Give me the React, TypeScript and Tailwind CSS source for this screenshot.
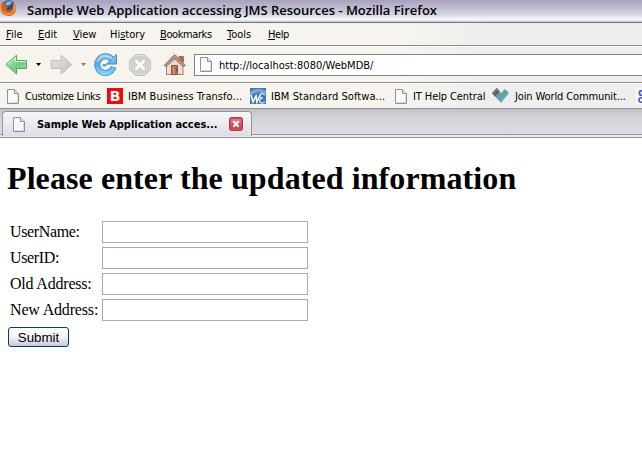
import React from "react";

const PageIcon = () => (
  <svg width="12" height="15" viewBox="0 0 12 15" className="shrink-0">
    <path d="M.5.5h7l4 4v10H.5z" fill="#f9fafc" stroke="#8d929c" />
    <path d="M7.5.5v4h4" fill="#e2e5ea" stroke="#8d929c" />
    <path d="M2 13.5h8.5V6" fill="none" stroke="#d3dae4" />
  </svg>
);

const FirefoxIcon = () => (
  <svg width="17" height="17" viewBox="0 0 17 17" className="shrink-0">
    <circle cx="8.5" cy="7" r="6.8" fill="#2b4c8e" />
    <path d="M5 3Q8 0 12 2L10 5 7 6z" fill="#7dbbe3" />
    <path d="M1.5 2L3 4Q5 2 7 4L5 5.5 8 7.5 6 9Q8 11.5 11 9.5Q14 7 12.5 2Q17 5 16 10Q14 16 8.5 16Q1.5 15 .8 9.5Q.3 5 1.5 2z" fill="#dc5f17" />
    <path d="M1.3 6Q2 12 7 13.2Q13 13.5 15 8Q14 15.5 8 15Q1 13.5 1.3 6z" fill="#f49a26" />
    <path d="M13.5 3.5Q16 7 15.2 10L13.4 11.5Q15 8 13.5 3.5z" fill="#ffe168" />
  </svg>
);

const ArrowIcon = ({ back = false }: { back?: boolean }) => (
  <svg width="23" height="22" viewBox="0 0 23 22" className="shrink-0">
    <defs>
      <linearGradient id="green" x2="1" y2="1"><stop stopColor="#c8f0c4" /><stop offset=".55" stopColor="#72cc84" /><stop offset="1" stopColor="#a0e5ac" /></linearGradient>
      <linearGradient id="gray" x2="1" y2="1"><stop stopColor="#e6e6e4" /><stop offset="1" stopColor="#c2c2c0" /></linearGradient>
    </defs>
    {back ? (
      <>
        <path d="M.9 10.5L11.5 1.2V6.5H21.5V14.5H11.5V20z" fill="url(#green)" stroke="#55a465" />
        <path d="M2.6 10.3L10.5 3.5V7.5H20.5" fill="none" stroke="#d8f5d5" />
      </>
    ) : (
      <path d="M21.7 10.5L11.2 1.2V6.5H1.2V14.5H11.2V20z" fill="url(#gray)" stroke="#bcbcbb" />
    )}
  </svg>
);

const Caret = ({ light = false }: { light?: boolean }) => (
  <svg width="5" height="3" viewBox="0 0 5 3" className="shrink-0">
    <path d="M0 0h5L2.5 3z" fill={light ? "#777" : "#000"} />
  </svg>
);

const ReloadIcon = () => (
  <svg width="24" height="24" viewBox="0 0 24 24" className="shrink-0">
    <defs><linearGradient id="blue" gradientUnits="userSpaceOnUse" x1="0" y1="1" x2="0" y2="22"><stop stopColor="#9cd4f3" /><stop offset=".5" stopColor="#4fa9e4" /><stop offset="1" stopColor="#8bdcff" /></linearGradient></defs>
    <path d="M17.8 6.2A8.3 8.3 0 1 0 19.5 14" fill="none" stroke="#3c86c2" strokeWidth="6" />
    <path d="M17.8 6.2A8.3 8.3 0 1 0 19.5 14" fill="none" stroke="url(#blue)" strokeWidth="4.4" />
    <path d="M22.4 1.5V11H12.6z" fill="#6dbbea" stroke="#3c86c2" />
    <path d="M4 8Q6.5 3 11.5 3Q16 3.2 18.6 6.4L21.5 3.6" fill="none" stroke="#c7eafb" />
    <path d="M8.5 11h5l-2 2.5h-3z" fill="#5aa7dc" />
  </svg>
);

const StopIcon = () => (
  <svg width="22" height="22" viewBox="0 0 22 22" className="shrink-0">
    <path d="M6.5.5h9L21.5 6.5v9L15.5 21.5h-9L.5 15.5v-9z" fill="#d0d0ce" stroke="#c0c0be" />
    <path d="M1.5 15V7l5.5-5.5h8l5.5 5.5v8l-5.5 5.5H7z" fill="none" stroke="#dededc" />
    <path d="M6.5 6.5l9 9M15.5 6.5l-9 9" stroke="#fff" strokeWidth="2.8" />
  </svg>
);

const HomeIcon = () => (
  <svg width="24" height="24" viewBox="0 0 24 24" className="shrink-0">
    <path d="M16 3.5h4.5V9H16z" fill="#cf614c" stroke="#a8685a" />
    <path d="M3.5 12L11.5 4.5 20 12v9.5H3.5z" fill="#e9dbcf" stroke="#a08476" />
    <path d="M1 12.5L11 2h1.5L22.5 12.5 20 13.5 11.7 6 3 13.5z" fill="#b59485" stroke="#8a6e62" strokeWidth=".8" />
    <path d="M8.5 12.5h6v9h-6z" fill="#b8745d" stroke="#8b5646" />
    <path d="M10.5 14v7" stroke="#dda58b" />
    <path d="M12.5 15.5h1v3" fill="none" stroke="#8b4434" />
    <path d="M3 21.5h5M15.5 21.5h5" stroke="#8a8f6c" />
  </svg>
);

const Row = ({ label, tracking }: { label: string; tracking: string }) => (
  <div className="flex h-[26px] items-center">
    <label className={`w-[92px] shrink-0 whitespace-nowrap text-base leading-[22px] ${tracking}`}>{label}</label>
    <input aria-label={label} className="h-[22px] w-[206px] border border-[#a5acb2] bg-white px-1 outline-none" />
  </div>
);

const Menu = ({ k, pre = "", rest, className }: { k: string; pre?: string; rest: string; className: string }) => (
  <span className={`mt-[3px] shrink-0 whitespace-nowrap ${className}`}>{pre}<u className="underline-offset-1">{k}</u>{rest}</span>
);

export default function App() {
  return (
    <div className="flex h-[458px] w-[642px] flex-col overflow-hidden bg-white font-['DejaVu_Sans_Condensed','DejaVu_Sans',sans-serif] text-[11px] text-black">
      <header className="flex h-[23px] shrink-0 items-start border-b border-[#6d7196] bg-[linear-gradient(#aaa0bd_0,#b7b3ca_25%,#d4d4e1_65%,#f8f8fc_88%,#c8c8d7_100%)]">
        <FirefoxIcon />
        <span className="ml-[10px] whitespace-nowrap font-['Open_Sans',sans-serif] text-[13px] font-semibold leading-5 tracking-[-0.02px]">Sample Web Application accessing JMS Resources - Mozilla Firefox</span>
      </header>
      <div className="flex h-[86px] shrink-0 flex-col bg-[linear-gradient(90deg,#f7f4ed_0,#f6f4ed_63%,#eee_76%)]">
        <nav className="flex h-[23px] shrink-0 items-center border-b border-[#8e9099] pl-[6px]">
          <Menu k="F" rest="ile" className="w-8" />
          <Menu k="E" rest="dit" className="w-[35px]" />
          <Menu k="V" rest="iew" className="w-[37px]" />
          <Menu pre="Hi" k="s" rest="tory" className="w-[50px]" />
          <Menu k="B" rest="ookmarks" className="w-[67px] tracking-[-0.4px]" />
          <Menu k="T" rest="ools" className="w-[41px]" />
          <Menu k="H" rest="elp" className="tracking-[-0.4px]" />
        </nav>
        <div className="flex h-[37px] shrink-0 items-center border-b border-t border-b-[#8e9099] border-t-white pl-[5px]">
          <ArrowIcon back />
          <div className="ml-2"><Caret /></div>
          <div className="ml-[9px]"><ArrowIcon /></div>
          <div className="ml-2"><Caret light /></div>
          <div className="ml-[8px]"><ReloadIcon /></div>
          <div className="ml-[11px]"><StopIcon /></div>
          <div className="ml-3"><HomeIcon /></div>
          <div className="ml-[7px] flex h-[22px] flex-1 items-center border border-r-0 border-[#7f8288] bg-white pl-[5px]">
            <PageIcon />
            <span className="ml-[7px] mt-[3px]">http://localhost:8080/WebMDB/</span>
          </div>
        </div>
        <div className="flex h-[26px] shrink-0 items-center border-b border-t border-b-[#8e9099] border-t-white pl-[7px]">
          <PageIcon />
          <span className="ml-[6px] mt-[3px] w-[82px] shrink-0 whitespace-nowrap tracking-[-0.35px]">Customize Links</span>
          <span className="flex size-4 shrink-0 items-center justify-center bg-[#f00c0c] font-['DejaVu_Sans'] text-sm font-bold leading-4 text-white">B</span>
          <span className="ml-[5px] mt-[3px] w-[122px] shrink-0 whitespace-nowrap tracking-[0.05px]">IBM Business Transfo...</span>
          <svg width="16" height="16" viewBox="0 0 16 16" className="shrink-0">
            <path d="M0 0h16v16H0z" fill="#4377b0" />
            <path d="M0 4q8-6 16-1v3q-8-4-16 2z" fill="#7ba5cf" />
            <path d="M1 7l2 7 3-6 1 6 3-7" fill="none" stroke="#fff" strokeWidth="1.5" />
            <path d="M15 7q-4-3-5 0-1 3 3 3-4 0-3 4 2 2 5 0" fill="none" stroke="#d3e0ed" strokeWidth="1.4" />
          </svg>
          <span className="ml-[5px] mt-[3px] w-[124px] shrink-0 whitespace-nowrap tracking-[0.07px]">IBM Standard Softwa...</span>
          <PageIcon />
          <span className="ml-[6px] mt-[3px] w-[79px] shrink-0 whitespace-nowrap tracking-[-0.1px]">IT Help Central</span>
          <svg width="17" height="16" viewBox="0 0 17 16" className="shrink-0">
            <path d="M0 5l5-5 4 5 4-4 4 4-8 10z" fill="#5fa3a8" />
            <path d="M0 5l5-5 3 4.5-5 4.5z" fill="#5c6468" />
            <path d="M1 6l5-5M3 9l5-5" stroke="#9aa6a8" strokeWidth=".6" />
            <path d="M8 14l8-9" stroke="#8cc3c6" strokeWidth=".7" />
          </svg>
          <span className="ml-[6px] mt-[3px] w-[121px] shrink-0 whitespace-nowrap tracking-[-0.12px]">Join World Communit...</span>
          <svg width="6" height="16" viewBox="0 0 6 16" className="shrink-0">
            <path d="M0 0h6v16H0z" fill="#fafafe" />
            <circle cx="5.8" cy="5" r="2.4" fill="none" stroke="#4858cf" strokeWidth="1.8" />
            <ellipse cx="5.8" cy="12" rx="3" ry="2.3" fill="none" stroke="#4858cf" strokeWidth="1.6" />
          </svg>
        </div>
      </div>
      <div className="flex h-[29px] shrink-0 flex-col border-b border-[#92939b] bg-[#ececf0]">
        <div className="flex h-[26px] border-b border-[#92939b] bg-[linear-gradient(#c2c1c6,#d5d3da_35%,#dddce2)] pl-[2px]">
          <div className="mt-[2px] flex h-[25px] w-[250px] items-center rounded-t border border-b-0 border-[#92939b] bg-[linear-gradient(#f7f7fa,#e9e7ec_60%,#e0dce4)] pl-[10px]">
            <PageIcon />
            <span className="ml-[12px] mt-[3px] w-[192px] shrink-0 whitespace-nowrap font-bold tracking-[-0.03px]">Sample Web Application acces...</span>
            <svg width="14" height="14" viewBox="0 0 14 14" className="shrink-0">
              <rect x=".5" y=".5" width="13" height="13" rx="2" fill="#cf4b57" stroke="#b43b45" />
              <path d="M2 2h10v4H2z" fill="#e0757d" />
              <path d="M4.3 4.3l5.4 5.4M9.7 4.3L4.3 9.7" stroke="#fff" strokeWidth="2" />
            </svg>
          </div>
        </div>
      </div>
      <main className="flex flex-1 flex-col items-start bg-white pl-[7px] font-['Liberation_Serif',serif]">
        <h1 className="mt-[22px] h-[37px] whitespace-nowrap text-[32px] font-bold leading-[37px] tracking-[0.09px]">Please enter the updated information</h1>
        <form className="mt-[22px] flex flex-col items-start pl-px">
          <div className="flex flex-col pl-[2px]">
            <Row label="UserName:" tracking="tracking-[-0.35px]" />
            <Row label="UserID:" tracking="tracking-[-0.35px]" />
            <Row label="Old Address:" tracking="tracking-[-0.2px]" />
            <Row label="New Address:" tracking="tracking-[-0.17px]" />
          </div>
          <button type="button" className="mt-1 h-5 w-[61px] rounded-[3px] border border-[#003c74] bg-[linear-gradient(#fff,#f4f3f8_50%,#c9c7d8)] pt-px font-['Liberation_Sans',sans-serif] text-[13.33px] leading-[18px]">Submit</button>
        </form>
      </main>
    </div>
  );
}
